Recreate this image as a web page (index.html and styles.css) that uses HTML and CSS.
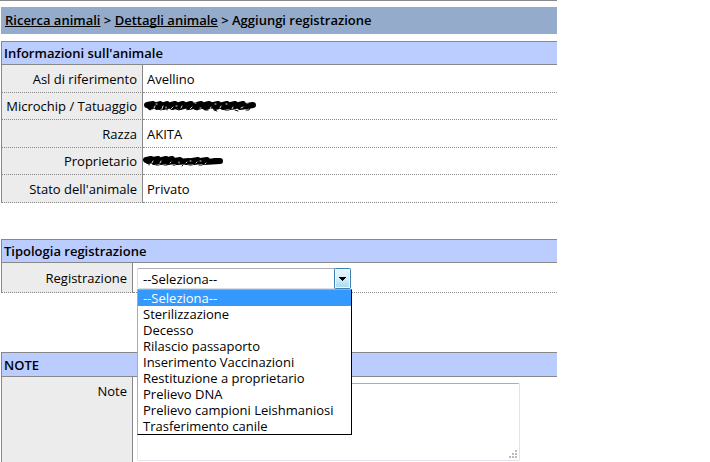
FILE: index.html
```html
<!DOCTYPE html>
<html lang="it">
<head>
<meta charset="utf-8">
<title>Aggiungi registrazione</title>
<link rel="stylesheet" href="styles.css">
</head>
<body>
<main class="page">
  <nav class="trail">
    <a href="#ricerca">Ricerca animali</a> &gt; <a href="#dettagli">Dettagli animale</a> &gt; Aggiungi registrazione
  </nav>

  <table class="details info">
    <thead><tr><th colspan="2">Informazioni sull'animale</th></tr></thead>
    <tbody>
      <tr><th scope="row">Asl di riferimento</th><td>Avellino</td></tr>
      <tr><th scope="row">Microchip / Tatuaggio</th><td>
        <svg class="scribble" width="114" height="12" viewBox="0 0 114 12" aria-hidden="true">
          <path class="mark" d="M4 5L10 4L7 7L17 4L14 7L24 4L20 7L32 4L29 7L40 4L37 7L48 4L46 7L58 4L54 7L66 4L62 7L75 4L72 7L84 4L80 7L92 4L88 7L100 4L97 7L110 5L104 6"/>
          <path class="digits" d="M7 8v2M15 9l3 1M24 9v1M33 9l3 1M44 9v1M51 9l3 1M62 10h3M71 10l3 1M82 10h4M92 10l3 1M103 10h3l1-2"/>
          <path class="gaps" d="M11 8l1-2M13 4h1M19 9l1-3M23 7v1M28 9l2-2M33 6h1M38 8l1-2M47 9l2-2M52 3h1M57 8h1M67 9l1-2M72 4h1M77 8l1-2M83 4h1M89 9l1-2M98 8l2-1M104 3h1"/>
        </svg>
      </td></tr>
      <tr><th scope="row">Razza</th><td>AKITA</td></tr>
      <tr><th scope="row">Proprietario</th><td>
        <svg class="scribble" width="82" height="12" viewBox="0 0 82 12" aria-hidden="true">
          <path class="mark" d="M3 5L8 4L5 6L15 4L11 7L23 4L18 7L29 4L25 7L37 5L34 7L46 6L43 7L55 5L51 7L64 5L61 7L77 6L71 6"/>
          <path class="digits" d="M6 9v1M13 10h3M21 10h3M30 10h2M40 10l-1 1M46 10h3M56 10h3"/>
          <path class="gaps" d="M9 8l1-2M17 8l1-2M27 8l1-1M36 8v-1M43 8l1-1M47 6h1M53 8l1-1M57 6h1M62 9l1-1"/>
        </svg>
      </td></tr>
      <tr><th scope="row">Stato dell'animale</th><td>Privato</td></tr>
    </tbody>
  </table>

  <table class="details form">
    <thead><tr><th colspan="2">Tipologia registrazione</th></tr></thead>
    <tbody>
      <tr>
        <th scope="row"><label for="registrazione">Registrazione</label></th>
        <td>
          <div class="combo">
            <select id="registrazione"><option>--Seleziona--</option></select>
            <svg class="arrow" width="17" height="21" viewBox="0 0 17 21" aria-hidden="true">
              <defs><linearGradient id="face" x1="0" y1="0" x2="0" y2="1">
                <stop offset="0" stop-color="#e8f6fd"/><stop offset=".48" stop-color="#d3effc"/><stop offset="1" stop-color="#a2d8f3"/>
              </linearGradient></defs>
              <rect x=".5" y=".5" width="16" height="20" rx="1" fill="url(#face)" stroke="#3c7fb1"/>
              <path d="M1.5 19.500V1.500H15.500V19.500z" fill="none" stroke="#effaff"/>
              <path d="M5 9h7v1h-1v1h-1v1H9v1H8v-1H7v-1H6v-1H5z" fill="#000" shape-rendering="crispEdges"/>
            </svg>
            <ul class="options" role="listbox" aria-label="Registrazione">
              <li role="option" aria-selected="true">--Seleziona--</li>
              <li role="option">Sterilizzazione</li>
              <li role="option">Decesso</li>
              <li role="option">Rilascio passaporto</li>
              <li role="option">Inserimento Vaccinazioni</li>
              <li role="option">Restituzione a proprietario</li>
              <li role="option">Prelievo DNA</li>
              <li role="option">Prelievo campioni Leishmaniosi</li>
              <li role="option">Trasferimento canile</li>
            </ul>
          </div>
        </td>
      </tr>
    </tbody>
  </table>

  <table class="details form notes">
    <thead><tr><th colspan="2">NOTE</th></tr></thead>
    <tbody>
      <tr>
        <th scope="row"><label for="note">Note</label></th>
        <td>
          <div class="memo">
            <textarea id="note"></textarea>
            <svg class="grip" width="8" height="8" viewBox="0 0 8 8" aria-hidden="true">
              <path d="M6 0h2v2H6zM3 3h2v2H3zM6 3h2v2H6zM0 6h2v2H0zM3 6h2v2H3zM6 6h2v2H6z" fill="#bbb"/>
            </svg>
          </div>
        </td>
      </tr>
    </tbody>
  </table>
</main>
</body>
</html>
```
FILE: styles.css
```css
* {
  box-sizing: border-box;
}

body {
  margin: 0;
  background: #fff;
  color: #000;
  font: 13px/16px "Trebuchet MS", "Open Sans", "Noto Sans", sans-serif;
}

.page {
  margin-right: 153px;
  border-top: 1px solid #888;
}

.trail {
  margin: 6px 0 7px 1px;
  padding: 5px 4px 6px;
  background: #95abcb;
  font-weight: 600;
}

.trail a {
  color: inherit;
  text-decoration: underline;
  text-decoration-thickness: 1px;
  text-decoration-skip-ink: none;
  text-underline-offset: 1px;
}

.details {
  width: calc(100% - 1px);
  margin: 0 0 36px 1px;
  border: solid #888;
  border-width: 1px 0 0 1px;
  border-spacing: 0;
}

.details th,
.details td {
  padding: 0 4px;
  font-weight: 400;
}

.details thead th {
  height: 23px;
  padding: 0 2px;
  background: #bbccff;
  border-bottom: 1px solid #888;
  font-weight: 600;
  text-align: left;
}

.details tbody th {
  width: 141px;
  padding-right: 5px;
  background: #ececec;
  border-right: 1px solid #888;
  text-align: right;
}

.details tbody th,
.details tbody td {
  border-bottom: 1px dotted #888;
}

.info tbody tr {
  height: 28px;
}

.info tbody tr:nth-child(even) {
  height: 27px;
}

.form {
  margin-bottom: 59px;
}

.form tbody th {
  width: 131px;
}

.form tbody td {
  height: 30px;
  padding-top: 2px;
}

.scribble {
  display: block;
  margin-left: -4px;
}

.scribble path {
  fill: none;
  stroke: #000;
  stroke-linecap: round;
  stroke-linejoin: round;
}

.scribble .mark {
  stroke-width: 6;
}

.scribble .digits {
  stroke-width: 1;
}

.scribble .gaps {
  stroke: #ddd;
  stroke-width: 1;
}

.combo {
  position: relative;
  width: 214px;
}

.combo select {
  display: block;
  width: 100%;
  height: 21px;
  padding: 0 5px;
  appearance: none;
  background: #fff;
  border: 1px solid #dadde2;
  border-top-color: #abadb3;
  border-radius: 2px;
  color: #000;
  font: inherit;
}

.arrow {
  position: absolute;
  top: 0;
  right: 0;
  pointer-events: none;
}

.options {
  position: absolute;
  z-index: 1;
  top: 21px;
  left: 0;
  width: 215px;
  margin: 0;
  padding: 0;
  list-style: none;
  background: #fff;
  border: 1px solid #000;
  border-top-color: #aaa;
  border-left-color: #aaa;
}

.options li {
  height: 16px;
  padding: 0 5px;
  overflow: hidden;
}

.options [aria-selected="true"] {
  background: #3399ff;
  color: #fff;
}

.notes {
  margin-bottom: 0;
}

.notes thead th {
  height: 24px;
}

.notes tbody th,
.notes tbody td {
  padding-top: 6px;
  padding-bottom: 1px;
  border-bottom: 0;
  vertical-align: top;
}

.memo {
  position: relative;
  max-width: 383px;
}

.memo textarea {
  display: block;
  width: 100%;
  height: 78px;
  resize: none;
  background: #fff;
  border: 1px solid #e2e3ea;
  border-top-color: #abadb3;
  border-radius: 2px;
  font: inherit;
}

.grip {
  position: absolute;
  right: 3px;
  bottom: 3px;
}
```
